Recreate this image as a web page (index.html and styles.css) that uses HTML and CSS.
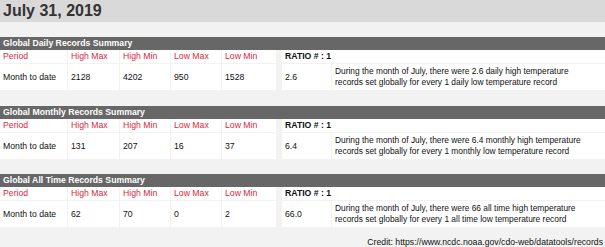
FILE: index.html
```html
<!DOCTYPE html>
<html>
<head>
<meta charset="utf-8">
<link rel="stylesheet" href="styles.css">
</head>
<body>
<div class="title">July 31, 2019</div>

<section class="sec">
  <div class="sec-head">Global Daily Records Summary</div>
  <div class="sec-body">
    <div class="grid left">
      <div class="lbl">Period</div><div class="lbl">High Max</div><div class="lbl">High Min</div><div class="lbl">Low Max</div><div class="lbl">Low Min</div>
      <div class="val">Month to date</div><div class="val">2128</div><div class="val">4202</div><div class="val">950</div><div class="val">1528</div>
    </div>
    <div class="grid right">
      <div class="ratio">RATIO # : 1</div>
      <div class="val">2.6</div><div class="val desc">During the month of July, there were 2.6 daily high temperature records set globally for every 1 daily low temperature record</div>
    </div>
  </div>
</section>

<section class="sec">
  <div class="sec-head">Global Monthly Records Summary</div>
  <div class="sec-body">
    <div class="grid left">
      <div class="lbl">Period</div><div class="lbl">High Max</div><div class="lbl">High Min</div><div class="lbl">Low Max</div><div class="lbl">Low Min</div>
      <div class="val">Month to date</div><div class="val">131</div><div class="val">207</div><div class="val">16</div><div class="val">37</div>
    </div>
    <div class="grid right">
      <div class="ratio">RATIO # : 1</div>
      <div class="val">6.4</div><div class="val desc">During the month of July, there were 6.4 monthly high temperature records set globally for every 1 monthly low temperature record</div>
    </div>
  </div>
</section>

<section class="sec">
  <div class="sec-head">Global All Time Records Summary</div>
  <div class="sec-body">
    <div class="grid left">
      <div class="lbl">Period</div><div class="lbl">High Max</div><div class="lbl">High Min</div><div class="lbl">Low Max</div><div class="lbl">Low Min</div>
      <div class="val">Month to date</div><div class="val">62</div><div class="val">70</div><div class="val">0</div><div class="val">2</div>
    </div>
    <div class="grid right">
      <div class="ratio">RATIO # : 1</div>
      <div class="val">66.0</div><div class="val desc">During the month of July, there were 66 all time high temperature records set globally for every 1 all time low temperature record</div>
    </div>
  </div>
</section>

<div class="credit">Credit: https://www.ncdc.noaa.gov/cdo-web/datatools/records</div>
</body>
</html>
```

FILE: styles.css
```css
html, body {
  margin: 0;
  padding: 0;
}
body {
  background: #f2f2f2;
  font-family: "Liberation Sans", Arial, sans-serif;
  font-size: 8.7px;
  color: #111;
  width: 605px;
  height: 247px;
  overflow: hidden;
}
.title {
  height: 22px;
  line-height: 22px;
  background: #d9d9d9;
  color: #333;
  font-weight: bold;
  font-size: 16px;
  padding-left: 3px;
}
.sec {
  margin-top: 15.5px;
}
.sec:first-of-type {
  margin-top: 15px;
}
.sec-head {
  height: 13px;
  line-height: 13px;
  background: #676767;
  color: #fff;
  font-weight: bold;
  padding-left: 3px;
}
.sec-body {
  display: flex;
  gap: 6px;
}
.grid {
  display: grid;
  grid-template-rows: 13px 26px;
  gap: 1px;
}
.left {
  width: 276px;
  grid-template-columns: 67px 51px 50px 50px 54px;
}
.right {
  flex: 1;
  grid-template-columns: 49px 1fr;
}
.grid > div {
  background: #fff;
  padding-left: 3px;
}
.lbl {
  color: #d62a3c;
  line-height: 13px;
}
.ratio {
  grid-column: 1 / span 2;
  font-weight: bold;
  color: #111;
  line-height: 13px;
}
.val {
  display: flex;
  align-items: center;
}
.desc {
  font-size: 8.4px;
  line-height: 11px;
  padding-left: 3px;
  padding-right: 22px;
}
.credit {
  text-align: right;
  padding-right: 2px;
  margin-top: 10px;
}
```
